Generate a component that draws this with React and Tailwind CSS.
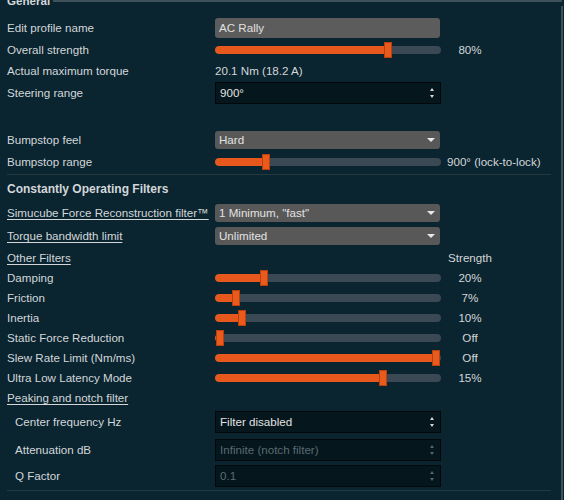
import React from 'react'

const Slider = ({ pos }) => {
  // pos = handle left offset in px inside the 226px track
  return (
    <div className="relative w-[226px] h-[16px] flex items-center">
      <div className="w-full h-[8px] rounded-full bg-[#3a4953] overflow-hidden">
        <div className="h-full bg-[#e8581c] rounded-l-full" style={{ width: pos + 4 }} />
      </div>
      <div
        className="absolute top-0 w-[8px] h-[16px] bg-[#ea5a1c] border border-[#b8400e]"
        style={{ left: pos }}
      />
    </div>
  )
}

const Dropdown = ({ text }) => (
  <div className="w-[225px] h-[18px] bg-[#585858] rounded-[3px] flex items-center justify-between pl-[4px] pr-[5px] text-[#e2e2e2]">
    <span>{text}</span>
    <span className="w-0 h-0 border-l-[4px] border-r-[4px] border-t-[4px] border-l-transparent border-r-transparent border-t-[#e8e8e8]" />
  </div>
)

const Spin = ({ text, disabled }) => (
  <div className="w-[226px] h-[22px] bg-[#05161d] border border-[#00080c] flex items-center justify-between pl-[4px] pr-[6px]">
    <span className={disabled ? 'text-[#5b6b71]' : 'text-[#e2e2e2]'}>{text}</span>
    <div className="flex flex-col gap-[4px]">
      <span className={'w-0 h-0 border-l-[2px] border-r-[2px] border-b-[3px] border-l-transparent border-r-transparent ' + (disabled ? 'border-b-[#56666c]' : 'border-b-[#d8d8d8]')} />
      <span className={'w-0 h-0 border-l-[2px] border-r-[2px] border-t-[3px] border-l-transparent border-r-transparent ' + (disabled ? 'border-t-[#56666c]' : 'border-t-[#d8d8d8]')} />
    </div>
  </div>
)

const Row = ({ h, label, under, indent, children, value }) => (
  <div className={'flex items-center whitespace-nowrap ' + h}>
    <div className={'shrink-0 ' + (indent ? 'w-[208px] pl-[8px]' : 'w-[208px]')}>
      <span className={under ? 'underline underline-offset-2' : ''}>{label}</span>
    </div>
    {children}
    {value !== undefined && <div className="w-[56px] ml-[1px] text-center">{value}</div>}
  </div>
)

const filters = [
  ['Damping', 45, '20%'],
  ['Friction', 17, '7%'],
  ['Inertia', 23, '10%'],
  ['Static Force Reduction', 1, 'Off'],
  ['Slew Rate Limit (Nm/ms)', 217, 'Off'],
  ['Ultra Low Latency Mode', 164, '15%'],
]

export default function App() {
  return (
    <div className="w-[564px] h-[500px] bg-[#0a2430] overflow-hidden text-[11.6px] text-[#d3d7d9]" style={{ fontFamily: '"Liberation Sans", Arial, sans-serif' }}>
      <div className="flex items-center h-[10px] -mt-[4px]">
        <span className="font-bold pl-[7px] pr-[3px] leading-none">General</span>
        <div className="flex-1 h-[2px] bg-[#3d525b] mr-[2px]" />
      </div>
      <div className="border-r-2 border-[#3d525b] mr-[1px] h-[494px] pl-[7px]">
        <div className="h-[11px]" />
        <Row h="h-[22px]" label="Edit profile name">
          <div className="w-[225px] h-[20px] bg-[#5c5c5c] rounded-[3px] flex items-center px-[4px] text-[#e0e0e0]">AC Rally</div>
        </Row>
        <Row h="h-[21px]" label="Overall strength" value="80%">
          <Slider pos={169} />
        </Row>
        <Row h="h-[21px]" label="Actual maximum torque">
          <span>20.1 Nm (18.2 A)</span>
        </Row>
        <Row h="h-[24px]" label="Steering range">
          <Spin text="900°" />
        </Row>
        <div className="h-[24px]" />
        <Row h="h-[22px]" label="Bumpstop feel">
          <Dropdown text="Hard" />
        </Row>
        <Row h="h-[21px]" label="Bumpstop range">
          <Slider pos={47} />
          <span className="ml-[6px]">900° (lock-to-lock)</span>
        </Row>
        <div className="h-[4px] flex items-center mr-[10px]">
          <div className="w-full h-[1px] bg-[#23383f]" />
        </div>
        <div className="h-[26px] flex items-center font-bold text-[12px]">Constantly Operating Filters</div>
        <Row h="h-[22px]" label="Simucube Force Reconstruction filter™" under>
          <Dropdown text={'1 Minimum, "fast"'} />
        </Row>
        <Row h="h-[24px]" label="Torque bandwidth limit" under>
          <Dropdown text="Unlimited" />
        </Row>
        <Row h="h-[20px]" label="Other Filters" under value="Strength">
          <div className="w-[226px]" />
        </Row>
        {filters.map(([label, pos, value]) => (
          <Row key={label} h="h-[20px]" label={label} value={value}>
            <Slider pos={pos} />
          </Row>
        ))}
        <Row h="h-[20px]" label="Peaking and notch filter" under />
        <Row h="h-[28px]" label="Center frequency Hz" indent>
          <Spin text="Filter disabled" />
        </Row>
        <Row h="h-[27px]" label="Attenuation dB" indent>
          <Spin text="Infinite (notch filter)" disabled />
        </Row>
        <Row h="h-[26px]" label="Q Factor" indent>
          <Spin text="0.1" disabled />
        </Row>
        <div className="h-[3px] flex items-center mr-[10px]">
          <div className="w-full h-[1px] bg-[#23383f]" />
        </div>
      </div>
    </div>
  )
}
